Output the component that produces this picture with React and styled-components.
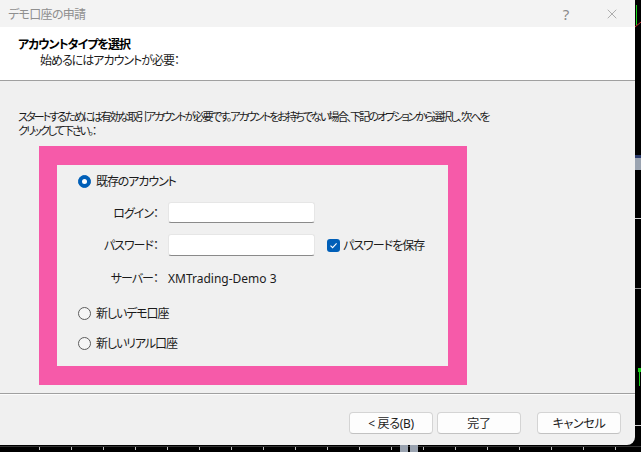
import React from 'react';
import styled, { createGlobalStyle } from 'styled-components';
import { X } from 'lucide-react';

const GlobalStyle = createGlobalStyle`
  html, body {
    margin: 0;
    padding: 0;
    background: #000;
  }
  body {
    font-family: "Noto Sans", "Noto Sans CJK JP", sans-serif;
    font-size: 12px;
    color: #1b1b1b;
  }
`;

const PINK = '#f65aa9';
const BLUE = '#005fb8';

const Screen = styled.div`
  width: 641px;
  height: 452px;
  background: #000;
  display: grid;
  grid-template-columns: 635px 1fr;
  grid-template-rows: 445px 1fr;
  overflow: hidden;
`;

const Dialog = styled.div`
  display: flex;
  flex-direction: column;
  background: #f0f0f0;
  border-bottom-right-radius: 8px;
  overflow: hidden;
`;

const TitleBar = styled.div`
  height: 27px;
  background: #f3f3f3;
  display: flex;
  align-items: center;
  padding-left: 8px;
`;

const Title = styled.div`
  flex: 1;
  color: #8f8f8f;
  font-feature-settings: "palt";
  letter-spacing: -0.7px;
`;

const CaptionButton = styled.div`
  width: 46px;
  height: 27px;
  display: flex;
  align-items: center;
  justify-content: center;
  color: #8a8a8a;
  font-size: 15px;
`;

const Header = styled.div`
  height: 54px;
  background: #fff;
  padding: 10px 0 0 18px;
  box-sizing: border-box;
  border-bottom: 1px solid #a0a0a0;
  font-feature-settings: "palt";
  letter-spacing: -1px;
  line-height: 16px;
`;

const HeaderTitle = styled.div`
  font-weight: bold;
  color: #000;
`;

const HeaderSub = styled.div`
  padding-left: 22px;
`;

const Body = styled.div`
  flex: 1;
  padding: 29px 0 0 18px;
  box-sizing: border-box;
  border-bottom: 1px solid #a0a0a0;
`;

const Intro = styled.p`
  margin: 0;
  line-height: 14px;
  font-size: 11.2px;
  font-feature-settings: "palt";
  letter-spacing: -2.1px;
  white-space: nowrap;
`;

const PinkFrame = styled.div`
  margin: 8px 0 0 21px;
  width: 428px;
  height: 239px;
  box-sizing: border-box;
  border: solid ${PINK};
  border-width: 19px 19px 19px 18px;
  background: #f0f0f0;
  padding-top: 8px;
  display: flex;
  flex-direction: column;
`;

const RadioRow = styled.label`
  display: flex;
  align-items: center;
  gap: 5px;
  height: 16px;
  padding-left: 21px;
  margin-top: ${p => p.$top || 0}px;
  font-feature-settings: "palt";
  letter-spacing: -1.1px;
`;

const Radio = styled.span`
  width: 13px;
  height: 13px;
  border-radius: 50%;
  box-sizing: border-box;
  display: flex;
  align-items: center;
  justify-content: center;
  background: ${p => (p.$checked ? BLUE : '#f6f6f6')};
  border: 1px solid ${p => (p.$checked ? BLUE : '#5c5c5c')};
  &::after {
    content: '';
    width: 5px;
    height: 5px;
    border-radius: 50%;
    background: #fff;
    display: ${p => (p.$checked ? 'block' : 'none')};
  }
`;

const FieldRow = styled.div`
  display: grid;
  grid-template-columns: 101px 147px auto;
  column-gap: 10px;
  align-items: center;
  height: ${p => p.$h}px;
  margin-top: ${p => p.$top}px;
`;

const FieldLabel = styled.span`
  text-align: right;
  font-feature-settings: "palt";
  letter-spacing: -1px;
`;

const Input = styled.div`
  height: 100%;
  box-sizing: border-box;
  background: #fff;
  border: 1px solid #e6e6e6;
  border-bottom-color: #8a8a8a;
  border-radius: 3px;
`;

const CheckRow = styled.label`
  display: flex;
  align-items: center;
  gap: 3px;
  margin-left: 2px;
  font-feature-settings: "palt";
  letter-spacing: -1px;
`;

const CheckBox = styled.span`
  width: 13px;
  height: 13px;
  border-radius: 3px;
  background: ${BLUE};
  display: flex;
  align-items: center;
  justify-content: center;
`;

const Footer = styled.div`
  height: 51px;
  border-top: 1px solid #fcfcfc;
  display: flex;
  justify-content: flex-end;
  align-items: flex-start;
  padding: 17px 14px 0 0;
  box-sizing: border-box;
`;

const Button = styled.div`
  width: 84px;
  height: 22px;
  box-sizing: border-box;
  background: #fdfdfd;
  border: 1px solid #d4d4d4;
  border-bottom-color: #c2c2c2;
  border-radius: 4px;
  display: flex;
  align-items: center;
  justify-content: center;
  margin-left: ${p => p.$gap}px;
  font-feature-settings: "palt";
  letter-spacing: -0.3px;
  white-space: pre;
`;

const SideChart = styled.svg`
  display: block;
`;

const Axis = styled.svg`
  grid-column: 1 / span 2;
  display: block;
`;

function Check() {
  return (
    <svg width="9" height="9" viewBox="0 0 9 9">
      <path d="M1.5 4.6 L3.6 6.7 L7.6 2.4" fill="none" stroke="#fff" strokeWidth="1.1" />
    </svg>
  );
}

export default function App() {
  const ticks = [];
  for (let x = 39; x < 641; x += 32) ticks.push(x);
  return (
    <>
      <GlobalStyle />
      <Screen>
        <Dialog>
          <TitleBar>
            <Title>デモ口座の申請</Title>
            <CaptionButton>?</CaptionButton>
            <CaptionButton>
              <X size={16} strokeWidth={1} />
            </CaptionButton>
          </TitleBar>
          <Header>
            <HeaderTitle>アカウントタイプを選択</HeaderTitle>
            <HeaderSub>始めるにはアカウントが必要：</HeaderSub>
          </Header>
          <Body>
            <Intro>
              スタートするためには有効な取引アカウントが必要です。アカウントをお持ちでない場合、下記のオプションから選択し、'次へ'を
              <br />
              クリックして下さい。：
            </Intro>
            <PinkFrame>
              <RadioRow>
                <Radio $checked />
                既存のアカウント
              </RadioRow>
              <FieldRow $h={21} $top={13}>
                <FieldLabel>ログイン：</FieldLabel>
                <Input />
              </FieldRow>
              <FieldRow $h={22} $top={11}>
                <FieldLabel>パスワード：</FieldLabel>
                <Input />
                <CheckRow>
                  <CheckBox>
                    <Check />
                  </CheckBox>
                  パスワードを保存
                </CheckRow>
              </FieldRow>
              <FieldRow $h={16} $top={13}>
                <FieldLabel>サーバー：</FieldLabel>
                <span>XMTrading-Demo 3</span>
              </FieldRow>
              <RadioRow $top={20}>
                <Radio />
                新しいデモ口座
              </RadioRow>
              <RadioRow $top={14}>
                <Radio />
                新しいリアル口座
              </RadioRow>
            </PinkFrame>
          </Body>
          <Footer>
            <Button>{'< 戻る(B)'}</Button>
            <Button $gap={4}>完了</Button>
            <Button $gap={16}>キャンセル</Button>
          </Footer>
        </Dialog>
        <SideChart width="6" height="445" viewBox="0 0 6 445">
          <rect x="1" y="5" width="1" height="20" fill="#19d119" />
          <line x1="0" y1="27" x2="6" y2="22" stroke="#c03030" strokeWidth="1" />
          <rect x="0" y="155" width="6" height="3" fill="#2a3a6a" />
          <rect x="0" y="158" width="6" height="12" fill="#9aa3b0" />
          <rect x="0" y="218" width="6" height="1" fill="#cfcfcf" />
          <rect x="0" y="288" width="6" height="1" fill="#8f8f8f" />
          <rect x="3" y="368" width="3" height="4" fill="#19d119" />
          <rect x="4" y="372" width="1" height="14" fill="#19d119" />
          <rect x="0" y="425" width="6" height="1" fill="#cfcfcf" />
        </SideChart>
        <Axis width="641" height="7" viewBox="0 0 641 7">
          <rect x="0" y="1" width="641" height="1" fill="#333" />
          {ticks.map(x => (
            <rect key={x} x={x} y="2" width="1" height="3" fill="#bdbdbd" />
          ))}
          <rect x="400" y="0" width="8" height="7" fill="#9aa3b0" />
          <rect x="410" y="0" width="8" height="7" fill="#9aa3b0" />
        </Axis>
      </Screen>
    </>
  );
}
